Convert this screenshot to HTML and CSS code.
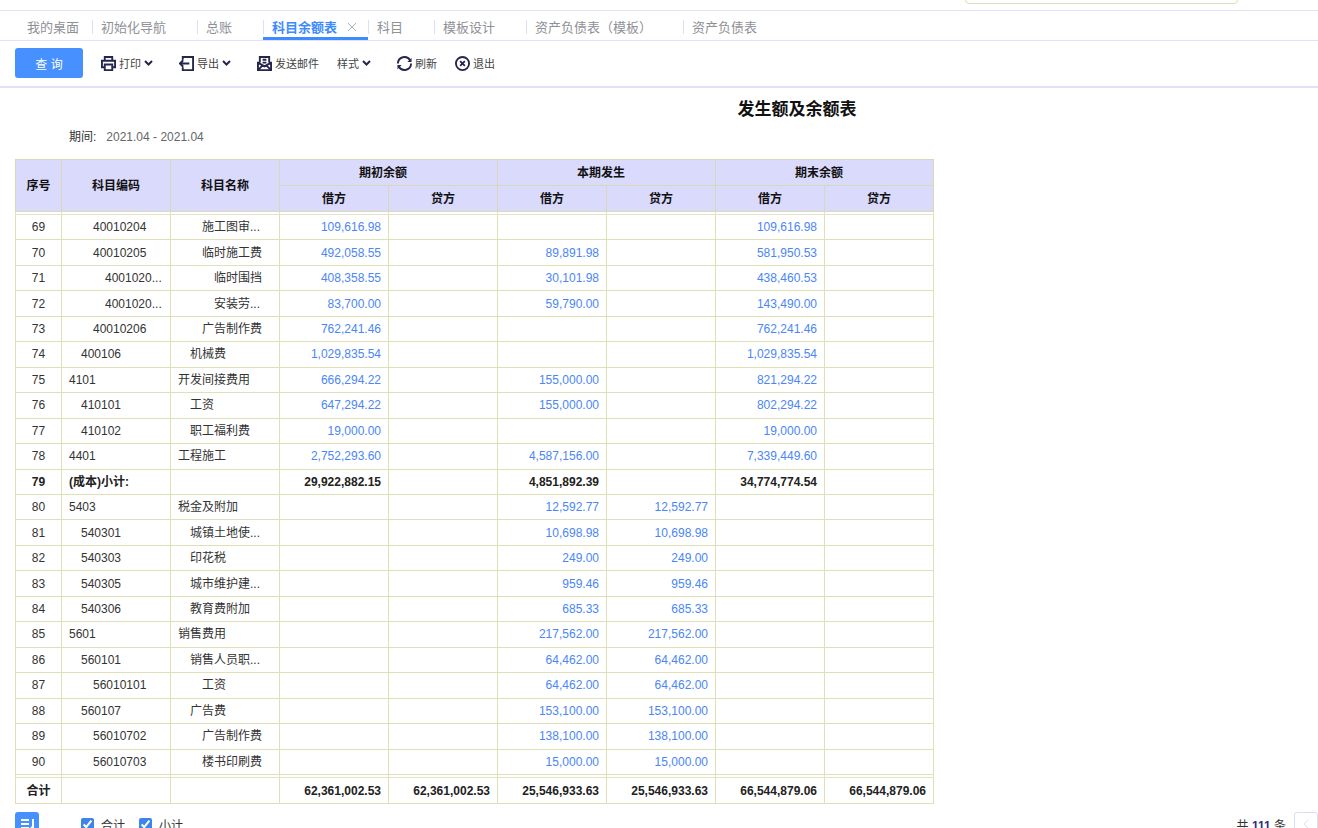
FILE: index.html
```html
<!doctype html>
<html lang="zh-CN">
  <head>
    <meta charset="UTF-8" />
    <meta name="viewport" content="width=device-width, initial-scale=1.0" />
    <title>科目余额表</title>
    <link rel="stylesheet" href="styles.css">
  </head>
  <body>
    <header class="topbar">
      <input class="search" type="search" aria-label="搜索" />
    </header>

    <nav class="tabs">
      <a class="tab tab-home" href="#">我的桌面</a>
      <a class="tab" href="#">初始化导航</a>
      <a class="tab" href="#">总账</a>
      <a class="tab active" href="#">科目余额表
        <svg class="close" viewBox="0 0 10 10"><path d="M1 1l8 8M9 1L1 9" /></svg>
      </a>
      <a class="tab" href="#">科目</a>
      <a class="tab" href="#">模板设计</a>
      <a class="tab" href="#">资产负债表（模板）</a>
      <a class="tab" href="#">资产负债表</a>
    </nav>

    <div class="toolbar">
      <button class="query">查 询</button>
      <button class="tool dropdown">
        <svg class="icon" viewBox="0 0 16 16"><path d="M4 5V1h8v4M4 12H1V5h14v7h-3M4 9h8v6H4z" /></svg>
        打印
        <svg class="arrow" viewBox="0 0 9 6"><path d="M1 1l3.5 3.5L8 1" /></svg>
      </button>
      <button class="tool dropdown">
        <svg class="icon" viewBox="0 0 16 16"><path d="M4 4V1h11v14H4v-3M1 8h10M4.5 4.5L1 8l3.5 3.5" /></svg>
        导出
        <svg class="arrow" viewBox="0 0 9 6"><path d="M1 1l3.5 3.5L8 1" /></svg>
      </button>
      <button class="tool">
        <svg class="icon" viewBox="0 0 16 16"><path d="M3 7V1h10v6M1 6v9h14V6M1 7l7 4 7-4M1 15l5-5M15 15l-5-5M6 4h4M6 7h4" /></svg>
        发送邮件
      </button>
      <button class="tool dropdown">
        样式
        <svg class="arrow" viewBox="0 0 9 6"><path d="M1 1l3.5 3.5L8 1" /></svg>
      </button>
      <button class="tool">
        <svg class="icon" viewBox="0 0 16 16"><path d="M1 8A7 7 0 0 1 14 4.500M15 8A7 7 0 0 1 2 11.500" /><path class="solid" d="M15.500 2v4.500H11zM.5 14V9.500H5z" /></svg>
        刷新
      </button>
      <button class="tool">
        <svg class="icon" viewBox="0 0 16 16"><circle cx="8" cy="8" r="7" /><path d="M5.500 5.500l5 5M10.500 5.500l-5 5" /></svg>
        退出
      </button>
    </div>

    <main class="report">
      <h1>发生额及余额表</h1>
      <p class="period"><span>期间:</span><span class="value">2021.04 - 2021.04</span></p>

      <table class="grid">
        <colgroup>
          <col class="col-no" />
          <col span="8" />
        </colgroup>
        <thead>
          <tr>
            <th rowspan="2">序号</th>
            <th rowspan="2">科目编码</th>
            <th rowspan="2">科目名称</th>
            <th class="group" colspan="2">期初余额</th>
            <th class="group" colspan="2">本期发生</th>
            <th class="group" colspan="2">期末余额</th>
          </tr>
          <tr><th>借方</th><th>贷方</th><th>借方</th><th>贷方</th><th>借方</th><th>贷方</th></tr>
          <tr class="spacer"><td></td><td></td><td></td><td></td><td></td><td></td><td></td><td></td><td></td></tr>
        </thead>
        <tbody>
          <tr class="lv2"><td>69</td><td>40010204</td><td>施工图审...</td><td>109,616.98</td><td></td><td></td><td></td><td>109,616.98</td><td></td></tr>
          <tr class="lv2"><td>70</td><td>40010205</td><td>临时施工费</td><td>492,058.55</td><td></td><td>89,891.98</td><td></td><td>581,950.53</td><td></td></tr>
          <tr class="lv3"><td>71</td><td>4001020...</td><td>临时围挡</td><td>408,358.55</td><td></td><td>30,101.98</td><td></td><td>438,460.53</td><td></td></tr>
          <tr class="lv3"><td>72</td><td>4001020...</td><td>安装劳...</td><td>83,700.00</td><td></td><td>59,790.00</td><td></td><td>143,490.00</td><td></td></tr>
          <tr class="lv2"><td>73</td><td>40010206</td><td>广告制作费</td><td>762,241.46</td><td></td><td></td><td></td><td>762,241.46</td><td></td></tr>
          <tr class="lv1"><td>74</td><td>400106</td><td>机械费</td><td>1,029,835.54</td><td></td><td></td><td></td><td>1,029,835.54</td><td></td></tr>
          <tr><td>75</td><td>4101</td><td>开发间接费用</td><td>666,294.22</td><td></td><td>155,000.00</td><td></td><td>821,294.22</td><td></td></tr>
          <tr class="lv1"><td>76</td><td>410101</td><td>工资</td><td>647,294.22</td><td></td><td>155,000.00</td><td></td><td>802,294.22</td><td></td></tr>
          <tr class="lv1"><td>77</td><td>410102</td><td>职工福利费</td><td>19,000.00</td><td></td><td></td><td></td><td>19,000.00</td><td></td></tr>
          <tr><td>78</td><td>4401</td><td>工程施工</td><td>2,752,293.60</td><td></td><td>4,587,156.00</td><td></td><td>7,339,449.60</td><td></td></tr>
          <tr class="subtotal"><td>79</td><td>(成本)小计:</td><td></td><td>29,922,882.15</td><td></td><td>4,851,892.39</td><td></td><td>34,774,774.54</td><td></td></tr>
          <tr><td>80</td><td>5403</td><td>税金及附加</td><td></td><td></td><td>12,592.77</td><td>12,592.77</td><td></td><td></td></tr>
          <tr class="lv1"><td>81</td><td>540301</td><td>城镇土地使...</td><td></td><td></td><td>10,698.98</td><td>10,698.98</td><td></td><td></td></tr>
          <tr class="lv1"><td>82</td><td>540303</td><td>印花税</td><td></td><td></td><td>249.00</td><td>249.00</td><td></td><td></td></tr>
          <tr class="lv1"><td>83</td><td>540305</td><td>城市维护建...</td><td></td><td></td><td>959.46</td><td>959.46</td><td></td><td></td></tr>
          <tr class="lv1"><td>84</td><td>540306</td><td>教育费附加</td><td></td><td></td><td>685.33</td><td>685.33</td><td></td><td></td></tr>
          <tr><td>85</td><td>5601</td><td>销售费用</td><td></td><td></td><td>217,562.00</td><td>217,562.00</td><td></td><td></td></tr>
          <tr class="lv1"><td>86</td><td>560101</td><td>销售人员职...</td><td></td><td></td><td>64,462.00</td><td>64,462.00</td><td></td><td></td></tr>
          <tr class="lv2"><td>87</td><td>56010101</td><td>工资</td><td></td><td></td><td>64,462.00</td><td>64,462.00</td><td></td><td></td></tr>
          <tr class="lv1"><td>88</td><td>560107</td><td>广告费</td><td></td><td></td><td>153,100.00</td><td>153,100.00</td><td></td><td></td></tr>
          <tr class="lv2"><td>89</td><td>56010702</td><td>广告制作费</td><td></td><td></td><td>138,100.00</td><td>138,100.00</td><td></td><td></td></tr>
          <tr class="lv2"><td>90</td><td>56010703</td><td>楼书印刷费</td><td></td><td></td><td>15,000.00</td><td>15,000.00</td><td></td><td></td></tr>
        </tbody>
        <tfoot>
          <tr class="spacer"><td></td><td></td><td></td><td></td><td></td><td></td><td></td><td></td><td></td></tr>
          <tr class="total"><td>合计</td><td></td><td></td><td>62,361,002.53</td><td>62,361,002.53</td><td>25,546,933.63</td><td>25,546,933.63</td><td>66,544,879.06</td><td>66,544,879.06</td></tr>
        </tfoot>
      </table>
    </main>

    <footer class="bottombar">
      <button class="sort" aria-label="排序">
        <svg viewBox="0 0 24 24"><path d="M6 8h8M6 12h8M6 16h8M18 7v10l-2-2" /></svg>
      </button>
      <label class="check"><input type="checkbox" checked />合计</label>
      <label class="check"><input type="checkbox" checked />小计</label>
      <span class="count">共 <b>111</b> 条</span>
      <button class="prev" aria-label="上一页">
        <svg viewBox="0 0 6 10"><path d="M5 1L1 5l4 4" /></svg>
      </button>
    </footer>
  </body>
</html>
```
FILE: styles.css
```css
* {
  box-sizing: border-box;
}

body {
  margin: 0;
  height: 100vh;
  overflow: hidden;
  background: #fff;
  color: #333;
  font-family: "Liberation Sans", "Noto Sans CJK SC", sans-serif;
  font-size: 12px;
}

button,
input {
  font-family: inherit;
}

svg {
  fill: none;
  stroke: currentColor;
}

/* top search, mostly scrolled away */
.topbar {
  display: flex;
  justify-content: flex-end;
  align-items: flex-end;
  height: 10px;
  padding: 0 80px 6px 0;
  overflow: hidden;
}

.search {
  flex: none;
  width: 273px;
  height: 28px;
  border: 1px solid #dedebe;
  border-radius: 4px;
  background: #fff;
}

.tabs {
  display: flex;
  align-items: center;
  height: 31px;
  padding-left: 18px;
  border-top: 1px solid #e0e0fb;
  border-bottom: 1px solid #e0e0fb;
}

.tab {
  position: relative;
  display: flex;
  align-items: center;
  height: 100%;
  padding: 2px 31px 0 9px;
  color: #909098;
  font-size: 13px;
  text-decoration: none;
  white-space: nowrap;
}

.tab-home {
  padding-right: 13px;
}

.tab + .tab::before {
  content: "";
  position: absolute;
  left: 0;
  top: 9px;
  width: 1px;
  height: 14px;
  background: #dedef5;
}

.tab.active {
  padding-right: 11px;
  color: #3d8bff;
  font-weight: bold;
}

.tab.active::after {
  content: "";
  position: absolute;
  left: 0;
  right: 0;
  bottom: 0;
  height: 3px;
  background: #3d8bff;
}

.close {
  width: 10px;
  height: 10px;
  margin-left: 10px;
  color: #a3b3c3;
}

.toolbar {
  display: flex;
  align-items: center;
  gap: 18px;
  height: 47px;
  padding: 0 15px 1px;
  border-bottom: 2px solid #e0e0fd;
}

.query {
  width: 68px;
  height: 30px;
  padding: 0;
  border: none;
  border-radius: 3px;
  background: #4790ff;
  color: #fff;
  font-size: 12px;
  cursor: pointer;
}

.tool {
  display: flex;
  align-items: center;
  gap: 3px;
  padding: 0;
  border: none;
  background: none;
  color: #444;
  font-size: 11px;
  white-space: nowrap;
  cursor: pointer;
}

.dropdown {
  margin-right: 8px;
}

.icon {
  width: 15px;
  height: 15px;
  color: #25254d;
  stroke-width: 2;
}

.icon .solid {
  fill: currentColor;
  stroke: none;
}

.arrow {
  width: 9px;
  height: 6px;
  color: #25254d;
  stroke-width: 2;
}

.report {
  padding: 10px 15px 0;
}

h1 {
  margin: 0 0 0 276px;
  color: #111;
  font-size: 17px;
  line-height: 24px;
  text-align: center;
}

.period {
  display: flex;
  gap: 10px;
  margin: 5px 0 12px 54px;
  line-height: 20px;
}

.period .value {
  color: #666;
}

.grid {
  width: 919px;
  table-layout: fixed;
  border-collapse: collapse;
  line-height: 16px;
}

.col-no {
  width: 46px;
}

.grid th,
.grid td {
  padding: 0 7px;
  border: 1px solid #dfdfb8;
  white-space: nowrap;
}

.grid th {
  height: 26px;
  border-color: #d8d8b8;
  background: #dadafd;
  color: #111;
}

.grid .group {
  padding-right: 18px;
}

.grid td {
  color: #4a86f7;
  text-align: right;
}

.grid .spacer td {
  height: 3px;
  border-color: #e4e4c4;
}

.grid tbody {
  height: 560px;
}

.grid td:first-child {
  color: #333;
  text-align: center;
}

.grid td:nth-child(2),
.grid td:nth-child(3) {
  color: #333;
  text-align: left;
}

.grid .lv1 td:nth-child(2),
.grid .lv1 td:nth-child(3) {
  padding-left: 19px;
}

.grid .lv2 td:nth-child(2),
.grid .lv2 td:nth-child(3) {
  padding-left: 31px;
}

.grid .lv3 td:nth-child(2),
.grid .lv3 td:nth-child(3) {
  padding-left: 43px;
  padding-right: 0;
}

.grid .subtotal td:nth-child(n),
.grid .total td:nth-child(n) {
  color: #222;
  font-weight: bold;
}

.grid .total td {
  height: 26px;
  border-top-color: #dedefa;
}

.bottombar {
  display: flex;
  align-items: center;
  height: 24px;
  margin-top: 8px;
  padding-left: 15px;
}

.sort {
  width: 24px;
  height: 24px;
  margin-right: 42px;
  padding: 0;
  border: none;
  border-radius: 3px;
  background: #4790ff;
  color: #fff;
}

.sort svg {
  display: block;
  stroke-width: 2;
}

.check {
  display: flex;
  align-items: center;
  gap: 7px;
  margin-right: 14px;
}

.check input {
  width: 13px;
  height: 13px;
  margin: 0;
  accent-color: #3d85ea;
}

.count {
  margin-left: auto;
  margin-right: 8px;
}

.count b {
  color: #2e2e80;
}

.prev {
  width: 24px;
  height: 24px;
  padding: 0;
  border: 1px solid #dcdcfa;
  border-radius: 3px;
  background: #fff;
  color: #dcdcfa;
}

.prev svg {
  width: 6px;
  height: 10px;
}
```
